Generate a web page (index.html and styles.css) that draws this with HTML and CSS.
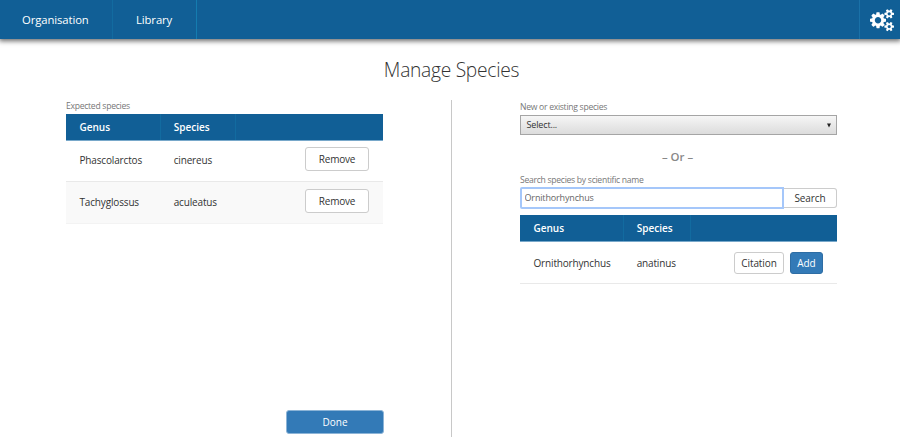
FILE: index.html
```html
<!DOCTYPE html>
<html lang="en">
<head>
<meta charset="utf-8">
<title>Manage Species</title>
<link rel="stylesheet" href="styles.css">
</head>
<body>
<header class="topbar">
  <nav class="nav">
    <a class="nav-item nav-org">Organisation</a>
    <a class="nav-item nav-lib">Library</a>
  </nav>
  <a class="settings" aria-label="Settings">
    <svg class="cogs" viewBox="0 0 1920 1792"><path d="M896 896q0-106-75-181t-181-75-181 75-75 181 75 181 181 75 181-75 75-181zm768 512q0-52-38-90t-90-38-90 38-38 90q0 53 37.500 90.500t90.500 37.500 90.500-37.500 37.500-90.500zm0-1024q0-52-38-90t-90-38-90 38-38 90q0 53 37.500 90.500t90.500 37.500 90.500-37.500 37.500-90.500zm-384 421v185q0 10-7 19.500t-16 10.500l-155 24q-11 35-32 76 34 48 90 115 7 11 7 20 0 12-7 19-23 30-82.500 89.500t-78.500 59.500q-11 0-21-7l-115-90q-37 19-77 31-11 108-23 155-7 24-30 24h-186q-11 0-20-7.500t-10-17.500l-23-153q-34-10-75-31l-118 89q-7 7-20 7-11 0-21-8-144-133-144-160 0-9 7-19 10-14 41-53t47-61q-23-44-35-82l-152-24q-10-1-17-9.500t-7-19.500v-185q0-10 7-19.500t16-10.500l155-24q11-35 32-76-34-48-90-115-7-11-7-20 0-12 7-20 22-30 82-89t79-59q11 0 21 7l115 90q34-18 77-32 11-108 23-154 7-24 30-24h186q11 0 20 7.500t10 17.500l23 153q34 10 75 31l118-89q8-7 20-7 11 0 21 8 144 133 144 160 0 8-7 19-12 16-42 54t-45 60q23 48 34 82l152 23q10 2 17 10.500t7 19.500zm640 533v140q0 16-149 31-12 27-30 52 51 113 51 138 0 4-4 7-122 71-124 71-8 0-46-47t-52-68q-20 2-30 2t-30-2q-14 21-52 68t-46 47q-2 0-124-71-4-3-4-7 0-25 51-138-18-25-30-52-149-15-149-31v-140q0-16 149-31 13-29 30-52-51-113-51-138 0-4 4-7 4-2 35-20t59-34 30-16q8 0 46 46.500t52 67.500q20-2 30-2t30 2q51-71 92-112l6-2q4 0 124 70 4 3 4 7 0 25-51 138 17 23 30 52 149 15 149 31zm0-1024v140q0 16-149 31-12 27-30 52 51 113 51 138 0 4-4 7-122 71-124 71-8 0-46-47t-52-68q-20 2-30 2t-30-2q-14 21-52 68t-46 47q-2 0-124-71-4-3-4-7 0-25 51-138-18-25-30-52-149-15-149-31v-140q0-16 149-31 13-29 30-52-51-113-51-138 0-4 4-7 4-2 35-20t59-34 30-16q8 0 46 46.500t52 67.500q20-2 30-2t30 2q51-71 92-112l6-2q4 0 124 70 4 3 4 7 0 25-51 138 17 23 30 52 149 15 149 31z"/></svg>
  </a>
</header>
<main>
  <h1 class="title">Manage Species</h1>
  <div class="columns">
    <section class="left">
      <p class="label label-left">Expected species</p>
      <div class="table table-expected">
        <div class="row head"><span>Genus</span><span>Species</span><span></span></div>
        <div class="row"><span>Phascolarctos</span><span>cinereus</span><span class="actions"><button class="btn remove">Remove</button></span></div>
        <div class="row alt"><span>Tachyglossus</span><span>aculeatus</span><span class="actions"><button class="btn remove">Remove</button></span></div>
      </div>
      <button class="btn primary done">Done</button>
    </section>
    <section class="right">
      <p class="label label-select">New or existing species</p>
      <div class="select"><span>Select...</span><svg class="arrow" viewBox="0 0 5 5"><path d="M0 0h5L2.500 5z"/></svg></div>
      <p class="or">– Or –</p>
      <p class="label label-search">Search species by scientific name</p>
      <div class="search">
        <input class="input" type="text" value="Ornithorhynchus">
        <button class="btn search-btn">Search</button>
      </div>
      <div class="table table-results">
        <div class="row head"><span>Genus</span><span>Species</span><span></span></div>
        <div class="row"><span>Ornithorhynchus</span><span>anatinus</span><span class="actions"><button class="btn citation">Citation</button><button class="btn primary add">Add</button></span></div>
      </div>
    </section>
  </div>
</main>
</body>
</html>
```
FILE: styles.css
```css
* { box-sizing: border-box; }
body {
  margin: 0;
  height: 442px;
  overflow: hidden;
  background: #fff;
  color: #333;
  font: 10px/14px "Open Sans", sans-serif;
}
p, h1 { margin: 0; }
.topbar {
  display: flex;
  justify-content: space-between;
  height: 39px;
  background: #115f96;
  box-shadow: 0 1px 5px 1px rgba(0, 0, 0, .6);
}
.nav { display: flex; }
.nav-item {
  padding-left: 22px;
  border-right: 1px solid #126ba0;
  color: #fff;
  font-size: 11.3px;
  letter-spacing: -.1px;
  line-height: 39px;
}
.nav-org { width: 113px; }
.nav-lib { width: 84px; padding-left: 23px; border-color: #147cb0; }
.settings {
  width: 41px;
  padding: 9px 0 0 10px;
  border-left: 1px solid #1a71a8;
}
.cogs { display: block; width: 24px; height: 22.4px; fill: #fff; overflow: visible; }
.title {
  margin-top: 18px;
  padding-left: 3px;
  text-align: center;
  font-size: 19.2px;
  font-weight: 300;
  letter-spacing: -.27px;
  line-height: 26px;
}
.columns {
  display: flex;
  height: 337px;
  margin-top: 17px;
  padding: 0 63px 0 66px;
}
.left {
  display: flex;
  flex-direction: column;
  width: 386px;
  padding-right: 68px;
  border-right: 1px solid #c8c8c8;
}
.right { width: 385px; padding-left: 68px; }
.label { color: #777; font-size: 8.6px; letter-spacing: -.28px; line-height: 13px; }
.label-left { height: 14px; }
.label-select { padding-top: 1px; height: 15px; }
.row {
  display: grid;
  align-items: center;
  height: 42px;
  border-bottom: 1px solid #e9e9e9;
}
.row > span { padding-left: 13.5px; letter-spacing: -.16px; }
.row > span:nth-child(2) { padding-left: 12.7px; }
.row.head > span { letter-spacing: 0; }
.table-expected .row { grid-template-columns: 95px 75px 1fr; }
.table-expected .row:not(.head) > span:not(.actions) { margin-top: -2px; }
.table-expected .row:nth-child(2) { height: 41px; }
.table-results .row { grid-template-columns: 104px 67px 1fr; }
.row.alt { background: #f9f9f9; border-color: #f3f3f3; }
.row.head {
  height: 27px;
  border: 0;
  border-bottom: 1px solid #78a8ca;
  background: #115f96;
  color: #fff;
  font-weight: 600;
}
.head > span { line-height: 26px; height: 26px; border-right: 1px solid #126ba0; }
.head > span:last-child { border: 0; }
.row > .actions { display: flex; padding: 0 14px 0 0; justify-content: flex-end; gap: 6px; }
.btn {
  display: block;
  padding: 0;
  border: 1px solid #ccc;
  border-radius: 3px;
  background: #fff;
  color: #333;
  font: 10px/14px "Open Sans", sans-serif;
  letter-spacing: -.1px;
}
.remove { width: 64px; height: 24px; margin-top: -4px; letter-spacing: -.2px; }
.primary { background: #337ab7; border-color: #2e6da4; color: #fff; }
.done { width: 98px; height: 24px; margin: auto -1px 3px auto; border-color: #8cb4d7; letter-spacing: 0; }
.select {
  display: flex;
  justify-content: space-between;
  align-items: center;
  width: 317px;
  height: 20px;
  padding: 0 5px 0 5.5px;
  border: 1px solid #a5a5a5;
  background: linear-gradient(#f6f6f6, #dcdcdc);
  font-size: 9px;
  letter-spacing: -.15px;
}
.arrow { width: 4px; height: 5px; fill: #222; }
.or {
  margin: 14px 0 9px;
  padding-right: 2px;
  text-align: center;
  color: #888;
  font-size: 11.4px;
  font-weight: 600;
  line-height: 16px;
}
.label-search { height: 13px; }
.search { display: flex; width: 317px; height: 22px; }
.input {
  width: 264px;
  padding: 0 2.5px;
  border: 2px solid #a5c7fa;
  border-radius: 2px 0 0 2px;
  outline: 0;
  background: #fff;
  color: #666;
  font: 9px/14px "Open Sans", sans-serif;
  letter-spacing: -.15px;
}
.search-btn { width: 53px; height: 20px; margin-top: 1px; border-left: 0; border-radius: 0 3px 3px 0; }
.table-results { margin-top: 6px; }
.table-results .row:not(.head) { height: 42px; }
.citation { width: 50px; height: 22px; }
.add { width: 33px; height: 22px; }
```
